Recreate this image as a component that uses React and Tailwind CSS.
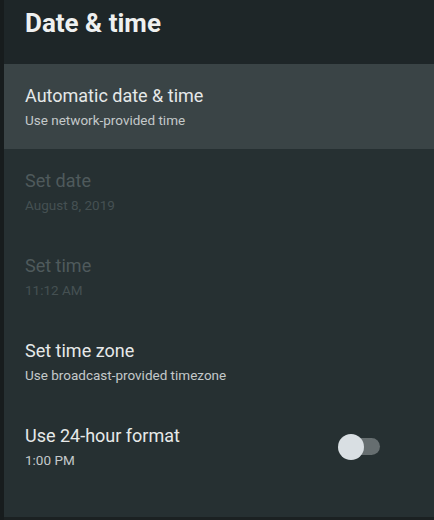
const rows = [
  { title: 'Set date', sub: 'August 8, 2019', disabled: true },
  { title: 'Set time', sub: '11:12 AM', disabled: true },
  { title: 'Set time zone', sub: 'Use broadcast-provided timezone' },
]

function Row({ title, sub, disabled, children, active }) {
  return (
    <div
      className={
        'flex h-[85px] items-center justify-between pl-[21px] pr-[52px] ' +
        (active ? 'bg-[#3a4446]' : '')
      }
    >
      <div className="flex flex-col">
        <span
          className={
            'text-[18px] leading-[22px] ' + (disabled ? 'text-[#4f5a5c]' : 'text-[#e6e9e9]')
          }
        >
          {title}
        </span>
        <span
          className={
            'mt-[5px] text-[13.5px] leading-[16px] ' + (disabled ? 'text-[#455052]' : 'text-[#c4c9ca]')
          }
        >
          {sub}
        </span>
      </div>
      {children}
    </div>
  )
}

export default function App() {
  return (
    <div className="flex h-[520px] w-[434px] bg-[#171c1d] font-['Roboto',sans-serif]">
      <div className="ml-[4px] flex flex-1 flex-col bg-[#263032]">
        <header className="flex h-[64px] items-center bg-[#1e2628] pl-[21px] pb-[18px]">
          <h1 className="text-[26px] font-bold text-[#eef0f0]">Date &amp; time</h1>
        </header>
        <Row title="Automatic date & time" sub="Use network-provided time" active />
        {rows.map((r) => (
          <Row key={r.title} {...r} />
        ))}
        <Row title="Use 24-hour format" sub="1:00 PM">
          <div className="relative flex h-[26px] w-[44px] items-center">
            <div className="ml-[6px] h-[17px] w-[36px] rounded-full bg-[#666e70]" />
            <div className="absolute left-0 top-0 h-[26px] w-[26px] rounded-full bg-[#d9dfe3]" />
          </div>
        </Row>
        <div className="flex-1" />
        <div className="h-[3px] bg-[#1b2122]" />
      </div>
    </div>
  )
}
